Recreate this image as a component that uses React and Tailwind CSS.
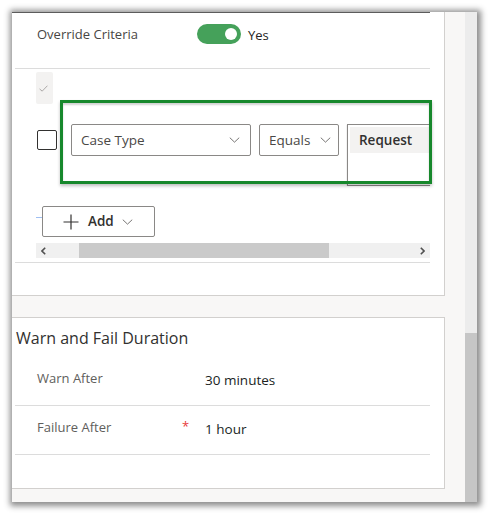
import React from "react";

function Chevron({ className }) {
  return (
    <svg viewBox="0 0 12 7" className={className} fill="none" stroke="currentColor" strokeWidth="1">
      <path d="M0.5 0.8 L6 6 L11.5 0.8" />
    </svg>
  );
}

export default function App() {
  return (
    <div className="w-[488px] h-[514px] bg-white pt-[12px] pl-[12px] font-['Open_Sans',sans-serif] text-[#323130]">
      <div className="relative flex w-[465px] h-[490px] shadow-[1px_1px_6px_3px_rgba(0,0,0,0.45)]">
        {/* main column */}
        <div className="flex flex-col w-[453px] bg-[#f8f7f6]">
          {/* criteria card */}
          <div className="w-[433px] h-[284px] bg-white border-r border-b border-[#d2d0ce]">
            <div className="w-[418px] h-px bg-[#5c5c5c]" />
            <div className="flex items-start h-[55px] pl-[25px] pt-[11px]">
              <span className="w-[160px] text-[13px] leading-[20px] text-[#484644]">Override Criteria</span>
              <div className="flex items-center justify-end w-[44px] h-[20px] rounded-full bg-[#45a15a] pr-[4px]">
                <div className="w-[12px] h-[12px] rounded-full bg-white" />
              </div>
              <span className="ml-[7px] mt-[1px] text-[13px] leading-[20px] text-[#252423]">Yes</span>
            </div>
            <div className="ml-[3px] w-[415px] h-px bg-[#dcdcdc]" />

            <div className="ml-[24px] w-[394px]">
              <div className="mt-[3px] flex items-center justify-center w-[17px] h-[32px] rounded-[2px] bg-[#f3f2f1]">
                <svg viewBox="0 0 10 8" className="w-[9px] h-[7px] ml-[-3px]" fill="none" stroke="#a19f9d" strokeWidth="1">
                  <path d="M0.5 4.5 L3.5 7 L9.5 0.8" />
                </svg>
              </div>

              <div className="overflow-hidden">
                <div className="mt-[20px] flex items-start pl-[1px] w-[520px]">
                  <div className="mt-[6px] w-[20px] h-[20px] rounded-[2px] border border-[#323130]" />
                  <div className="ml-[14px] flex items-center justify-between w-[180px] h-[32px] border border-[#8a8886] rounded-[2px] pl-[9px] pr-[10px]">
                    <span className="text-[13.5px] text-[#4a4846]">Case Type</span>
                    <Chevron className="w-[11px] h-[6px] text-[#605e5c]" />
                  </div>
                  <div className="ml-[8px] flex items-center justify-between w-[80px] h-[32px] border border-[#8a8886] rounded-[2px] pl-[9px] pr-[7px]">
                    <span className="text-[13.5px] text-[#4a4846]">Equals</span>
                    <Chevron className="w-[11px] h-[6px] text-[#605e5c]" />
                  </div>
                  <div className="ml-[8px] w-[130px] h-[62px] border border-[#8a8886] shadow-[0_1px_1px_rgba(0,0,0,0.3)] p-[2px]">
                    <div className="h-[26px] bg-[#f3f2f1] pl-[9px] flex items-center">
                      <span className="text-[13.5px] font-semibold text-[#323130]">Request</span>
                    </div>
                  </div>
                </div>
              </div>

              <div className="mt-[20px] flex items-start">
                <div className="mt-[11px] w-[6px] h-px bg-[#9fbff2]" />
                <div className="flex items-center w-[113px] h-[31px] border border-[#8a8886] rounded-[2px] pl-[20px]">
                  <svg viewBox="0 0 16 16" className="w-[16px] h-[16px]" fill="none" stroke="#323130" strokeWidth="1.2">
                    <path d="M8 0.5 V15.5 M0.5 8 H15.5" />
                  </svg>
                  <span className="ml-[9px] text-[13.5px] font-semibold text-[#323130]">Add</span>
                  <Chevron className="ml-[8px] w-[11px] h-[6px] text-[#605e5c]" />
                </div>
              </div>

              <div className="mt-[6px] flex items-center w-[394px] h-[15px] bg-[#f0f0f0]">
                <div className="w-[43px] flex items-center pl-[5px]">
                  <svg viewBox="0 0 5 8" className="w-[5px] h-[8px]" fill="none" stroke="#505050" strokeWidth="1.6">
                    <path d="M4.2 0.8 L1 4 L4.2 7.2" />
                  </svg>
                </div>
                <div className="w-[250px] h-[15px] bg-[#cacaca]" />
                <div className="flex-1 flex justify-end pr-[5px]">
                  <svg viewBox="0 0 5 8" className="w-[5px] h-[8px]" fill="none" stroke="#505050" strokeWidth="1.6">
                    <path d="M0.8 0.8 L4 4 L0.8 7.2" />
                  </svg>
                </div>
              </div>
            </div>
            <div className="mt-[4px] ml-[3px] w-[415px] h-px bg-[#dcdcdc]" />
          </div>

          {/* duration card */}
          <div className="mt-[21px] w-[433px] h-[172px] bg-white border-t border-r border-b border-[#d2d0ce]">
            <div className="pl-[4px] pt-[8px] h-[39px] text-[16px] text-[#323130]">Warn and Fail Duration</div>
            <div className="ml-[3px] w-[415px]">
              <div className="flex items-center h-[49px] border-b border-[#dcdcdc] pl-[22px]">
                <span className="w-[168px] text-[13px] text-[#605e5c] mb-[4px]">Warn After</span>
                <span className="text-[13.5px] text-[#201f1e] mb-[2px]">30 minutes</span>
              </div>
              <div className="flex items-center h-[49px] border-b border-[#dcdcdc] pl-[22px]">
                <span className="w-[145px] text-[13px] text-[#605e5c] mb-[4px]">Failure After</span>
                <span className="w-[23px] text-[13px] text-[#e83a3a] mb-[6px]">*</span>
                <span className="text-[13.5px] text-[#201f1e] mb-[2px]">1 hour</span>
              </div>
            </div>
          </div>
        </div>

        {/* vertical scrollbar */}
        <div className="flex flex-col w-[12px]">
          <div className="h-[321px] bg-[#ececec]" />
          <div className="flex-1 bg-[#c6c6c6]" />
        </div>

        {/* highlight annotation */}
        <div className="absolute left-[48px] top-[88px] w-[372px] h-[84px] border-[3px] border-[#17882c] shadow-[inset_0_2px_2px_rgba(0,0,0,0.18),0_2px_3px_rgba(0,0,0,0.25)]" />
      </div>
    </div>
  );
}
